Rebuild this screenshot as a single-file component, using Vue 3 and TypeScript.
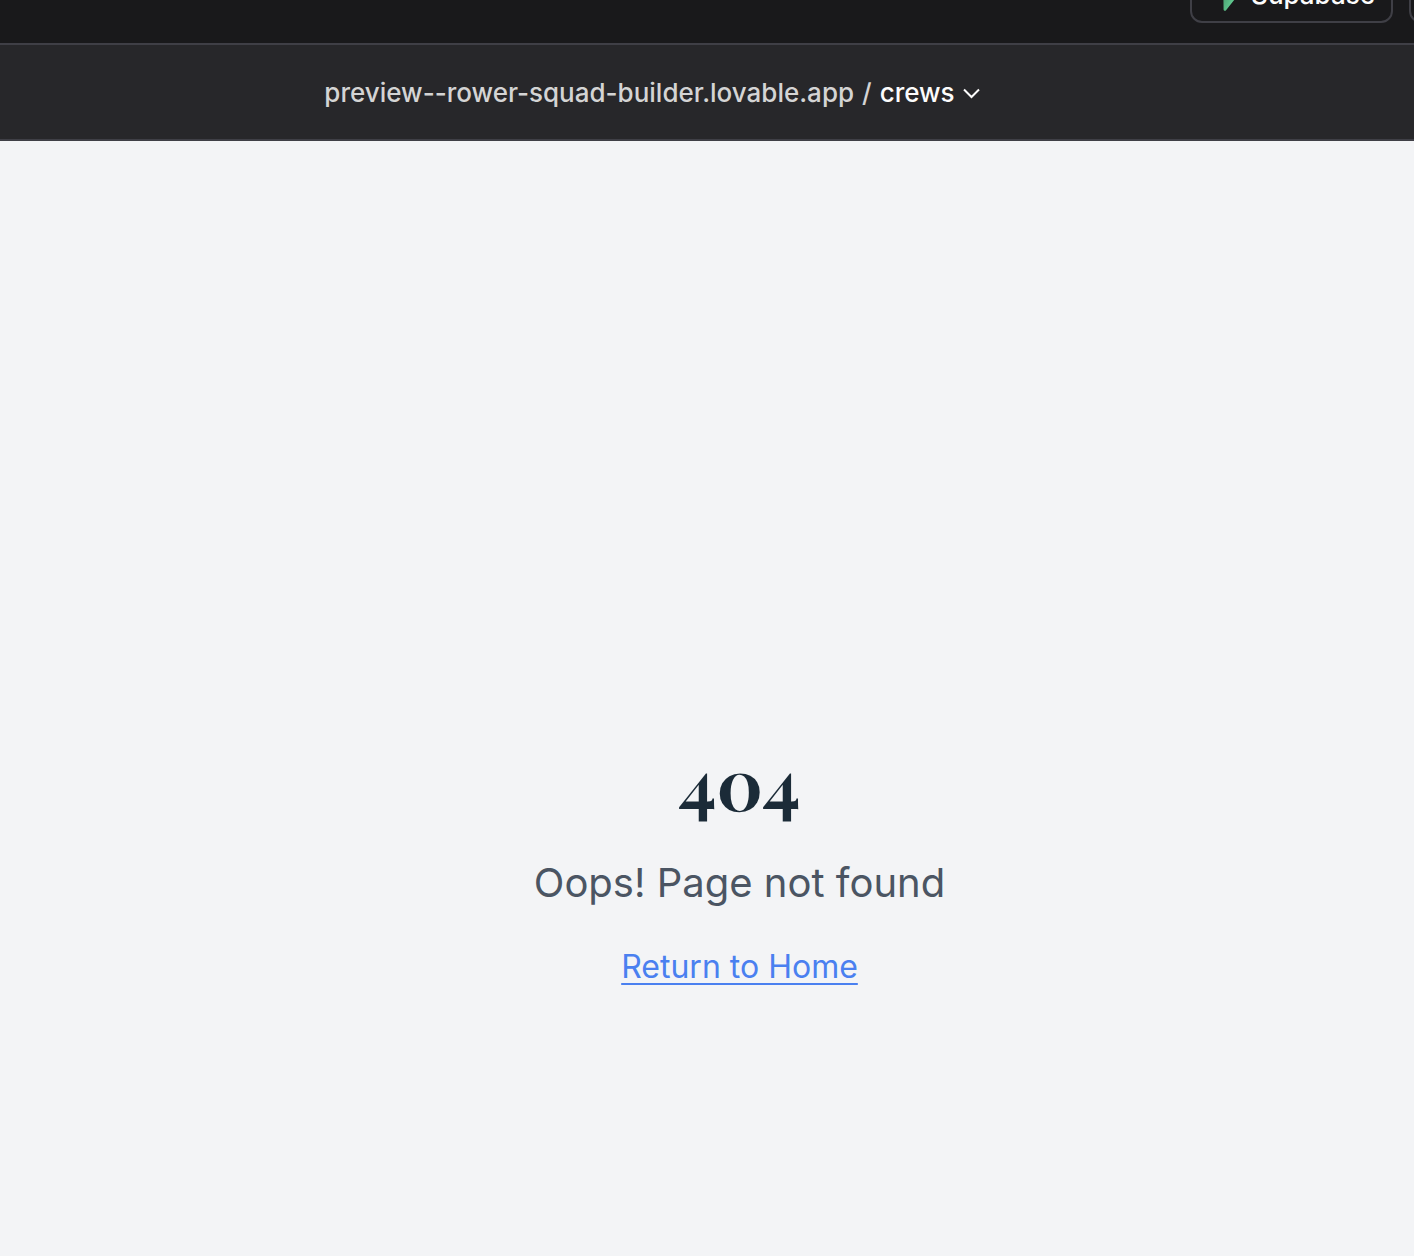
<script setup lang="ts">
import { ref } from 'vue'

const host = 'preview--rower-squad-builder.lovable.app'
const routes: string[] = ['crews']
const route = ref<string>('crews')
</script>

<template>
  <div class="app">
    <header class="toolbar">
      <button type="button" class="tool">
        <svg class="logo" viewBox="0 0 113 113" aria-hidden="true">
          <defs>
            <linearGradient id="bolt" x1="54" y1="80" x2="84" y2="94" gradientUnits="userSpaceOnUse">
              <stop stop-color="#4fa877" />
              <stop offset="1" stop-color="#62cb92" />
            </linearGradient>
          </defs>
          <path
            d="M63.7 110.3C60.8 113.9 55.1 111.9 55 107.3L54 40.1H99.2C107.4 40.1 112 49.5 106.9 55.9L63.7 110.3Z"
            fill="url(#bolt)"
          />
          <path
            d="M45.3 2.1C48.2 -1.5 54 0.5 54 5.1L54.5 72.3H9.8C1.6 72.3 -2.9 62.8 2.2 56.4L45.3 2.1Z"
            fill="#3ecf8e"
          />
        </svg>
        <span>Supabase</span>
      </button>
      <button type="button" class="tool tool-more" aria-label="More"></button>
    </header>

    <nav class="address" aria-label="Preview address">
      <span>{{ host }}</span>
      <span>/</span>
      <span class="route">
        <select v-model="route" aria-label="Route">
          <option v-for="name in routes" :key="name" :value="name">{{ name }}</option>
        </select>
        <svg class="chevron" viewBox="0 0 18 12" aria-hidden="true">
          <path d="M1 2.5L8.5 10L16 2.5" fill="none" stroke="currentColor" stroke-width="2" />
        </svg>
      </span>
    </nav>

    <main class="page">
      <h1>404</h1>
      <p>Oops! Page not found</p>
      <a href="/">Return to Home</a>
    </main>
  </div>
</template>

<style>
body {
  margin: 0;
  background: #f3f4f6;
}
</style>

<style scoped>
.app {
  display: flex;
  flex-direction: column;
  min-height: 100vh;
  font-family: Inter, "Liberation Sans", sans-serif;
}

.toolbar {
  box-sizing: border-box;
  display: flex;
  justify-content: flex-end;
  align-items: flex-end;
  gap: 16px;
  height: 45px;
  padding-bottom: 20px;
  overflow: hidden;
  background: #19191b;
  border-bottom: 2px solid #3f3f46;
}

.tool {
  box-sizing: border-box;
  display: flex;
  flex: none;
  align-items: center;
  gap: 11px;
  height: 56px;
  padding: 0 16px;
  border: 2px solid #3f3f46;
  border-radius: 12px;
  background: transparent;
  color: #fcfcfc;
  font: 500 26px/40px Inter, "Liberation Sans", sans-serif;
}

.tool-more {
  width: 56px;
  margin-right: -51px;
}

.logo {
  width: 32px;
  height: 32px;
}

.address {
  box-sizing: border-box;
  display: flex;
  justify-content: center;
  align-items: center;
  gap: 8px;
  height: 96px;
  padding: 2px 109px 0 0;
  background: #27272a;
  border-bottom: 2px solid #3f3f46;
  color: #d4d4d4;
  font-size: 26px;
  font-weight: 500;
  line-height: 40px;
}

.route {
  display: flex;
  align-items: center;
  gap: 8px;
  color: #fcfcfc;
}

.route select {
  appearance: none;
  margin: 0;
  padding: 0;
  border: 0;
  background: transparent;
  color: inherit;
  font: inherit;
}

.chevron {
  width: 18px;
  height: 12px;
}

.page {
  display: flex;
  flex: 1;
  flex-direction: column;
  align-items: center;
  padding: 600px 0 64px 65px;
  background: #f3f4f6;
}

h1 {
  margin: 0 0 34px;
  color: #1b2b38;
  font: 700 72px/80px "Playfair Display", "Liberation Serif", serif;
}

p {
  margin: 0 0 32px;
  color: #4b5563;
  font-size: 40px;
  line-height: 56px;
}

a {
  color: #4a80f0;
  font-size: 32px;
  line-height: 48px;
  text-decoration: underline;
  text-decoration-thickness: 2px;
  text-underline-offset: 5px;
}
</style>
